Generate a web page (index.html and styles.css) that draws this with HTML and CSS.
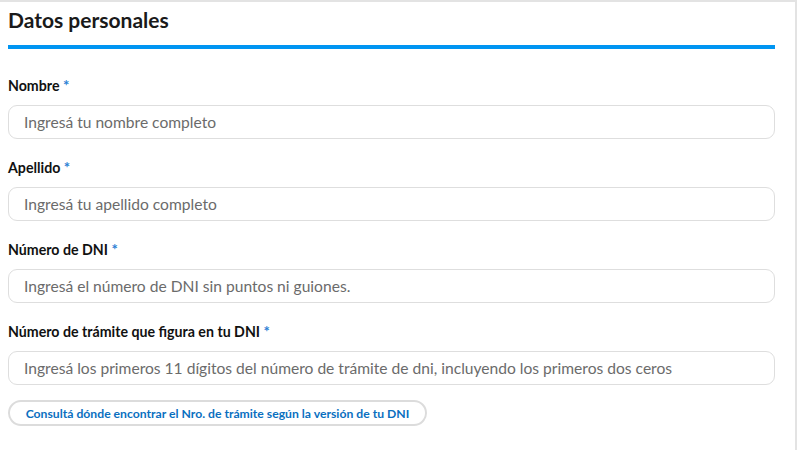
FILE: index.html
```html
<!DOCTYPE html>
<html lang="es">
<head>
    <meta charset="UTF-8">
    <meta name="viewport" content="width=device-width, initial-scale=1.0">
    <title>Datos personales</title>
    <link rel="stylesheet" href="styles.css">
</head>
<body>
    <div class="panel">
        <h2 class="section-title">Datos personales</h2>

        <form class="form">
            <div class="field">
                <label for="nombre">Nombre <span class="req">*</span></label>
                <input id="nombre" type="text" placeholder="Ingresá tu nombre completo">
            </div>

            <div class="field">
                <label for="apellido">Apellido <span class="req">*</span></label>
                <input id="apellido" type="text" placeholder="Ingresá tu apellido completo">
            </div>

            <div class="field">
                <label for="dni">Número de DNI <span class="req">*</span></label>
                <input id="dni" type="text" placeholder="Ingresá el número de DNI sin puntos ni guiones.">
            </div>

            <div class="field">
                <label for="tramite">Número de trámite que figura en tu DNI <span class="req">*</span></label>
                <input id="tramite" type="text" placeholder="Ingresá los primeros 11 dígitos del número de trámite de dni, incluyendo los primeros dos ceros">
            </div>

            <button type="button" class="btn-link">Consultá dónde encontrar el Nro. de trámite según la versión de tu DNI</button>
        </form>
    </div>
</body>
</html>
```

FILE: styles.css
```css
body {
    margin: 0;
    padding: 0;
    background: #fff;
    font-family: Lato, "Open Sans", Arial, sans-serif;
    color: #111;
}

.panel {
    box-sizing: border-box;
    width: 797px;
    height: 450px;
    border-top: 2px solid #e3e3e3;
    border-right: 2px solid #e3e3e3;
    padding: 0 20px 0 8px;
}

.section-title {
    margin: 0;
    padding: 5px 0 13px;
    font-size: 21px;
    font-weight: 700;
    color: #1a1a1a;
    border-bottom: 4px solid #0095f2;
}

.form {
    padding-top: 28px;
}

.field {
    margin-bottom: 20px;
}

.field label {
    display: block;
    height: 18px;
    font-size: 14.2px;
    font-weight: 700;
    line-height: 18px;
    margin-bottom: 10px;
}

.req {
    color: #2a7fd4;
    font-size: 15px;
    line-height: 1;
}

.field input {
    box-sizing: border-box;
    display: block;
    width: 100%;
    height: 34px;
    padding: 0 15px;
    border: 1px solid #dedede;
    border-radius: 9px;
    font-family: inherit;
    font-size: 15.6px;
    outline: none;
}

.field input::placeholder {
    color: #6b6b6b;
}

.btn-link {
    display: block;
    margin-top: -5px;
    height: 26px;
    width: 419px;
    padding: 0 12px;
    border: 2px solid #dcdcdc;
    border-radius: 13px;
    background: #fff;
    color: #0a6fbf;
    font-family: inherit;
    font-size: 12.2px;
    font-weight: 700;
    white-space: nowrap;
    cursor: pointer;
}
```
